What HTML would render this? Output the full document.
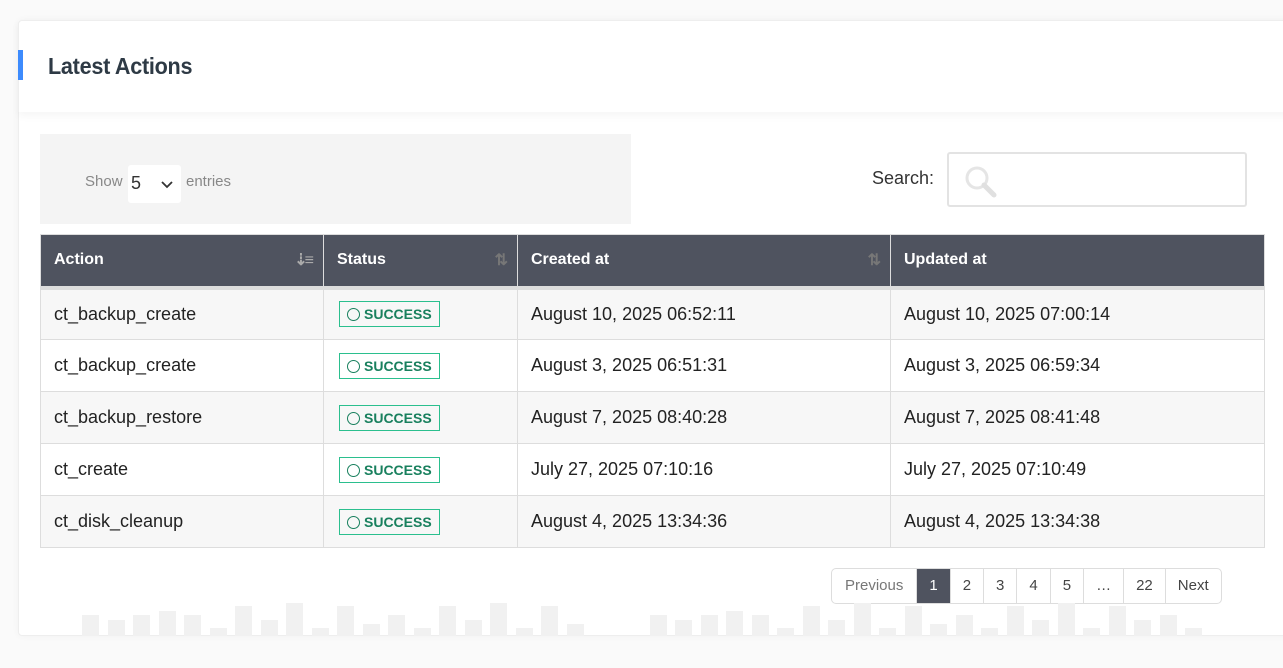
<!DOCTYPE html>
<html><head><meta charset="utf-8"><style>
*{box-sizing:border-box;margin:0;padding:0}
body{width:1283px;height:668px;background:#fafafa;font-family:"Liberation Sans",sans-serif;position:relative;overflow:hidden;color:#333}
.card{position:absolute;left:18px;top:20px;width:1280px;height:616px;background:#fff;border:1px solid #eee;border-radius:4px;box-shadow:0 0 8px rgba(0,0,0,.04)}
.hdr{position:absolute;left:18px;top:20px;width:1280px;height:92px;box-shadow:0 4px 8px rgba(0,0,0,.04)}
.acc{position:absolute;left:18px;top:50px;width:5px;height:30px;background:#3d8bfd}
h1{position:absolute;left:48px;top:53px;font-size:23px;font-weight:bold;color:#2e3a45;letter-spacing:-0.3px;transform:scaleX(.94);transform-origin:left}
.len{position:absolute;left:40px;top:134px;width:591px;height:90px;background:#f4f4f4}
.len .t{position:absolute;top:39px;font-size:15px;color:#888}
.sel{position:absolute;left:88px;top:31px;width:53px;height:38px;background:#fff;border-radius:3px}
.srch{position:absolute;left:872px;top:168px;font-size:18px;color:#333}
.sbox{position:absolute;left:947px;top:152px;width:300px;height:55px;border:2px solid #e3e3e3;border-radius:3px;background:#fff}
table{position:absolute;left:40px;top:234px;border-collapse:collapse;width:1225px;font-size:18px}
th{background:#4f535f;color:#fff;text-align:left;font-size:16px;height:53px;padding-left:13px;border:1px solid #ddd;border-bottom:4px solid #ddd;position:relative}
td{height:52px;padding-left:13px;border:1px solid #ddd;color:#222}
tr.g td{background:#f7f7f7}
.badge{display:inline-block;border:1px solid #2bbf8e;color:#19805e;font-size:14px;font-weight:bold;padding:3px 7px 3px 7px;line-height:18px;margin-left:2px}
.badge i{display:inline-block;width:13px;height:13px;border:1.5px solid #19805e;border-radius:50%;vertical-align:-2px;margin-right:4px}
.sort{position:absolute;right:12px;top:15px;color:#888;font-size:16px;letter-spacing:-3px}
.pg{position:absolute;left:831px;top:568px;height:36px;display:flex;border:1px solid #ddd;border-radius:5px;overflow:hidden;background:#fff}
.pg div{padding:0 12px;line-height:34px;font-size:15px;color:#444;border-left:1px solid #ddd}
.pg div:first-child{border-left:0;color:#777;padding:0 13px}
.pg .a{background:#4f535f;color:#fff}
.bar{position:absolute;width:17px;background:#f1f1f1;bottom:32px}
</style></head><body>
<div class="card"></div>
<div class="hdr"></div>
<div class="acc"></div>
<h1>Latest Actions</h1>
<div class="len"><span class="t" style="left:45px">Show</span><div class="sel"><span style="position:absolute;left:3px;top:8px;font-size:18px;color:#333">5</span><svg style="position:absolute;left:33px;top:16px" width="12" height="8"><path d="M1 1l5 5 5-5" stroke="#333" stroke-width="1.8" fill="none"/></svg></div><span class="t" style="left:146px">entries</span></div>
<div class="srch">Search:</div>
<div class="sbox"><svg style="position:absolute;left:14px;top:10px" width="40" height="34"><circle cx="14" cy="14" r="10" stroke="#e5e5e5" stroke-width="3" fill="none"/><path d="M21 21l10 10" stroke="#e0e0e0" stroke-width="5" stroke-linecap="round"/></svg></div>
<table>
<tr><th style="width:283px">Action<span class="sort" style="color:#aaa">⇣≡</span></th><th style="width:194px">Status<span class="sort" style="color:#777">⇅</span></th><th style="width:373px">Created at<span class="sort" style="color:#777">⇅</span></th><th>Updated at</th></tr>
<tr class="g"><td>ct_backup_create</td><td><span class="badge"><i></i>SUCCESS</span></td><td>August 10, 2025 06:52:11</td><td>August 10, 2025 07:00:14</td></tr>
<tr><td>ct_backup_create</td><td><span class="badge"><i></i>SUCCESS</span></td><td>August 3, 2025 06:51:31</td><td>August 3, 2025 06:59:34</td></tr>
<tr class="g"><td>ct_backup_restore</td><td><span class="badge"><i></i>SUCCESS</span></td><td>August 7, 2025 08:40:28</td><td>August 7, 2025 08:41:48</td></tr>
<tr><td>ct_create</td><td><span class="badge"><i></i>SUCCESS</span></td><td>July 27, 2025 07:10:16</td><td>July 27, 2025 07:10:49</td></tr>
<tr class="g"><td>ct_disk_cleanup</td><td><span class="badge"><i></i>SUCCESS</span></td><td>August 4, 2025 13:34:36</td><td>August 4, 2025 13:34:38</td></tr>
</table>
<div class="pg"><div>Previous</div><div class="a">1</div><div>2</div><div>3</div><div>4</div><div>5</div><div>…</div><div>22</div><div>Next</div></div>
<div class="bar" style="left:82px;height:21px"></div><div class="bar" style="left:108px;height:16px"></div><div class="bar" style="left:133px;height:21px"></div><div class="bar" style="left:159px;height:25px"></div><div class="bar" style="left:184px;height:21px"></div><div class="bar" style="left:210px;height:8px"></div><div class="bar" style="left:235px;height:30px"></div><div class="bar" style="left:261px;height:16px"></div><div class="bar" style="left:286px;height:33px"></div><div class="bar" style="left:312px;height:8px"></div><div class="bar" style="left:337px;height:30px"></div><div class="bar" style="left:363px;height:12px"></div><div class="bar" style="left:388px;height:21px"></div><div class="bar" style="left:414px;height:8px"></div><div class="bar" style="left:439px;height:30px"></div><div class="bar" style="left:465px;height:16px"></div><div class="bar" style="left:490px;height:33px"></div><div class="bar" style="left:516px;height:8px"></div><div class="bar" style="left:541px;height:30px"></div><div class="bar" style="left:567px;height:12px"></div>
<div class="bar" style="left:650px;height:21px"></div><div class="bar" style="left:675px;height:16px"></div><div class="bar" style="left:701px;height:21px"></div><div class="bar" style="left:726px;height:25px"></div><div class="bar" style="left:752px;height:21px"></div><div class="bar" style="left:777px;height:8px"></div><div class="bar" style="left:803px;height:30px"></div><div class="bar" style="left:828px;height:16px"></div><div class="bar" style="left:854px;height:33px"></div><div class="bar" style="left:879px;height:8px"></div><div class="bar" style="left:905px;height:30px"></div><div class="bar" style="left:930px;height:12px"></div><div class="bar" style="left:956px;height:21px"></div><div class="bar" style="left:981px;height:8px"></div><div class="bar" style="left:1007px;height:30px"></div><div class="bar" style="left:1032px;height:16px"></div><div class="bar" style="left:1058px;height:33px"></div><div class="bar" style="left:1083px;height:8px"></div><div class="bar" style="left:1109px;height:30px"></div><div class="bar" style="left:1134px;height:16px"></div><div class="bar" style="left:1160px;height:21px"></div><div class="bar" style="left:1185px;height:8px"></div>
</body></html>
